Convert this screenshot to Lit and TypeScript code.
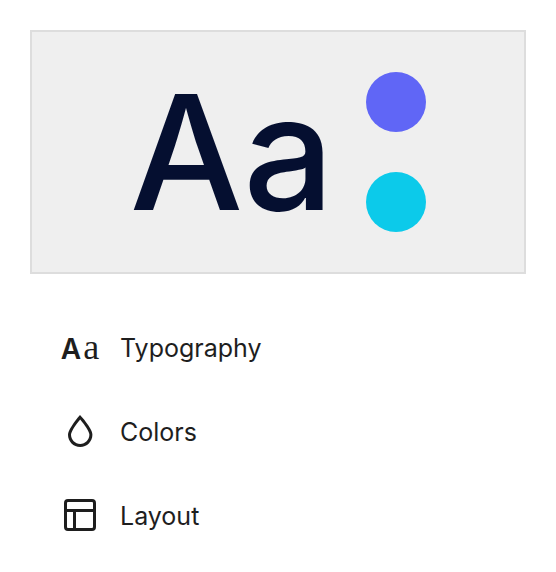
import { LitElement, html, css, svg } from "lit";
import { customElement } from "lit/decorators.js";

const dropIcon = svg`<path d="M17.2 10.9c-.5-1-1.2-2.1-2.1-3.2-.6-.9-1.3-1.7-2.1-2.6L12 4l-1 1.1c-.6.9-1.3 1.7-2 2.6-.8 1.2-1.5 2.3-2 3.2-.6 1.2-1 2.2-1 3 0 3.4 2.7 6.1 6.1 6.1s6.1-2.7 6.1-6.1c0-.8-.3-1.8-1-3zm-5.1 7.6c-2.5 0-4.6-2.1-4.6-4.6 0-.3.1-1 .8-2.3.5-.9 1.1-1.9 2-3.1.7-.9 1.3-1.7 1.8-2.3.7.8 1.3 1.6 1.8 2.3.8 1.1 1.5 2.2 2 3.1.7 1.3.8 2 .8 2.3 0 2.5-2.1 4.6-4.6 4.6z"/>`;

const layoutIcon = svg`<path d="M18 5.5H6a.5.5 0 00-.5.5v3h13V6a.5.5 0 00-.5-.5zm.5 5H10v8h8a.5.5 0 00.5-.5v-7.5zm-10 0h-3V18a.5.5 0 00.5.5h2.5v-8zM6 4h12a2 2 0 012 2v12a2 2 0 01-2 2H6a2 2 0 01-2-2V6a2 2 0 012-2z"/>`;

@customElement("app-root")
export class AppRoot extends LitElement {
  static styles = css`
    :host {
      display: block;
      box-sizing: border-box;
      min-height: 100vh;
      padding: 30px 30px 0;
      background: #fff;
      color: #1e1e1e;
      font-family: Inter, "Liberation Sans", sans-serif;
    }
    .preview {
      display: flex;
      align-items: center;
      justify-content: center;
      gap: 32px;
      padding: 40px;
      border: 2px solid #ddd;
      background: #efefef;
    }
    .sample {
      color: #050f30;
      font-size: 160px;
      font-weight: 500;
      line-height: 160px;
    }
    .swatches {
      display: flex;
      flex-direction: column;
      gap: 40px;
    }
    .swatch {
      width: 60px;
      height: 60px;
      border-radius: 50%;
    }
    .primary {
      background: #6066f6;
    }
    .secondary {
      background: #0ccaea;
    }
    .menu {
      list-style: none;
      margin: 31px 0 0;
      padding: 0;
    }
    .item {
      display: flex;
      align-items: center;
      gap: 16px;
      width: 100%;
      padding: 18px 26px;
      border: 0;
      background: none;
      color: inherit;
      font: inherit;
      font-size: 25px;
      line-height: 32px;
      text-align: left;
      cursor: pointer;
    }
    .label {
      padding-top: 2px;
    }
    .icon {
      display: flex;
      flex: none;
      align-items: baseline;
      justify-content: center;
      gap: 2px;
      width: 48px;
      height: 48px;
      line-height: 48px;
    }
    .icon svg {
      width: 48px;
      height: 48px;
      fill: currentColor;
    }
    .sans {
      font-size: 28px;
      font-weight: 600;
    }
    .serif {
      font-family: "Liberation Serif", serif;
      font-size: 36px;
    }
  `;

  private item(icon: unknown, label: string) {
    return html`<li>
      <button class="item" type="button">
        <span class="icon" aria-hidden="true">${icon}</span>
        <span class="label">${label}</span>
      </button>
    </li>`;
  }

  private glyph(shape: unknown) {
    return html`<svg viewBox="0 0 24 24">${shape}</svg>`;
  }

  render() {
    return html`
      <div class="preview">
        <span class="sample">Aa</span>
        <div class="swatches">
          <div class="swatch primary"></div>
          <div class="swatch secondary"></div>
        </div>
      </div>
      <nav aria-label="Styles">
        <ul class="menu">
          ${this.item(html`<span class="sans">A</span><span class="serif">a</span>`, "Typography")}
          ${this.item(this.glyph(dropIcon), "Colors")}
          ${this.item(this.glyph(layoutIcon), "Layout")}
        </ul>
      </nav>
    `;
  }
}
